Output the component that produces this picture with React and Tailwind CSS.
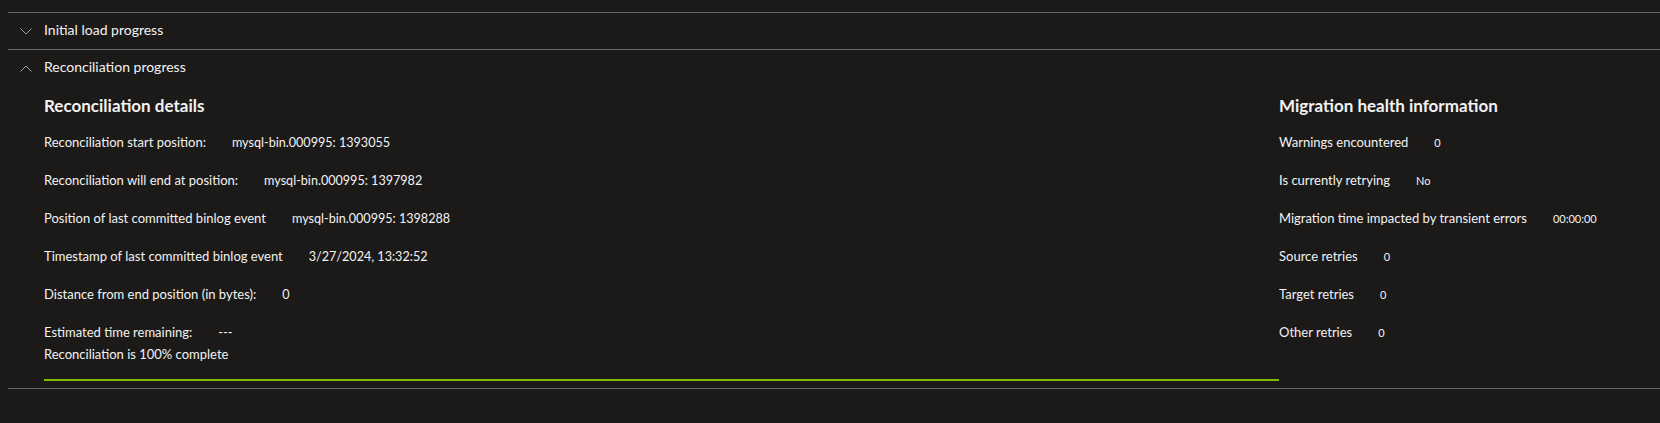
const details = [
    { label: "Reconciliation start position:", value: "mysql-bin.000995: 1393055" },
    { label: "Reconciliation will end at position:", value: "mysql-bin.000995: 1397982" },
    { label: "Position of last committed binlog event", value: "mysql-bin.000995: 1398288" },
    { label: "Timestamp of last committed binlog event", value: "3/27/2024, 13:32:52" },
    { label: "Distance from end position (in bytes):", value: "0" },
    { label: "Estimated time remaining:", value: "---" },
];

const health = [
    { label: "Warnings encountered", value: "0" },
    { label: "Is currently retrying", value: "No" },
    { label: "Migration time impacted by transient errors", value: "00:00:00" },
    { label: "Source retries", value: "0" },
    { label: "Target retries", value: "0" },
    { label: "Other retries", value: "0" },
];

function Row({ label, value, last, small }) {
    return (
        <div className={`flex items-baseline h-[20px] leading-[20px] ${last ? "" : "mb-[18px]"}`}>
            <span className="text-[13px]">{label}</span>
            <span className={`ml-[26px] ${small ? "text-[11px]" : "text-[12.6px]"}`}>{value}</span>
        </div>
    );
}

function Chevron({ open }) {
    return (
        <svg width="12" height="7" viewBox="0 0 12 7" fill="none" stroke="#a19f9d" strokeWidth="1">
            {open
                ? <polyline points="0.5,6.5 6,1 11.5,6.5" />
                : <polyline points="0.5,0.5 6,6 11.5,0.5" />}
        </svg>
    );
}

function SectionHeader({ title, open }) {
    return (
        <div className="flex items-center h-[37px] border-t border-[#6b6967]">
            <div className="w-[36px] pl-[12px] flex">
                <Chevron open={open} />
            </div>
            <span className="text-[14px] -mt-[3px]">{title}</span>
        </div>
    );
}

export default function App() {
    return (
        <div
            className="w-[1660px] h-[423px] bg-[#1b1a19] text-[#f3f2f1] pt-[12px] pl-[8px] overflow-hidden"
            style={{ fontFamily: '"Segoe UI", Lato, sans-serif' }}
        >
            <SectionHeader title="Initial load progress" />
            <SectionHeader title="Reconciliation progress" open />

            <div className="flex pl-[36px] pt-[9px]">
                <div className="w-[1235px] flex flex-col">
                    <h3 className="text-[17px] font-bold leading-[22px] mb-[15px]">Reconciliation details</h3>
                    {details.map((d, i) => (
                        <Row key={d.label} label={d.label} value={d.value} last={i === details.length - 1} />
                    ))}
                    <div className="text-[13px] leading-[20px] mt-[2px]">Reconciliation is 100% complete</div>
                    <div className="h-[2px] bg-[#7fba00] mt-[15px]"></div>
                </div>

                <div className="flex-1 flex flex-col">
                    <h3 className="text-[17px] font-bold leading-[22px] mb-[15px]">Migration health information</h3>
                    {health.map((d) => (
                        <Row key={d.label} label={d.label} value={d.value} small />
                    ))}
                </div>
            </div>

            <div className="border-t border-[#6b6967] mt-[7px]"></div>
        </div>
    );
}
